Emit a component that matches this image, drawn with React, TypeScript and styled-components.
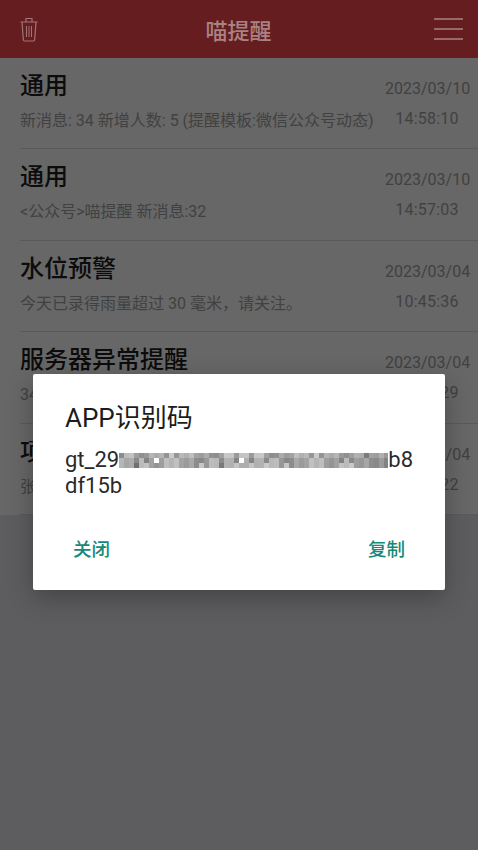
import * as React from 'react';
import styled, { createGlobalStyle } from 'styled-components';

const FONT = `Roboto, "Noto Sans CJK SC", sans-serif`;

const GlobalStyle = createGlobalStyle`
    html, body {
        margin: 0;
        padding: 0;
        background: #5d5d5f;
    }
    * {
        box-sizing: border-box;
    }
`;

const Screen = styled.div`
    position: relative;
    width: 478px;
    height: 850px;
    overflow: hidden;
    background: #5d5d5f;
    font-family: ${FONT};
`;

const Header = styled.header`
    display: flex;
    align-items: center;
    justify-content: space-between;
    height: 58px;
    padding: 0 15px 0 20px;
    background: #651d1f;
`;

const Title = styled.h1`
    margin: 0 0 0 5px;
    font-size: 22px;
    font-weight: 500;
    color: #a98283;
`;

const List = styled.div`
    background: #676767;
`;

const Row = styled.div`
    display: flex;
    justify-content: space-between;
    height: 91.4px;
    margin-left: 20px;
    padding: 12px 8px 0 0;
    border-bottom: 1px solid #5a5a5a;
`;

const RowMain = styled.div`
    min-width: 0;
`;

const RowTitle = styled.div`
    font-size: 24px;
    line-height: 32px;
    font-weight: 500;
    color: #0c0c0c;
`;

const RowText = styled.div`
    margin-top: 7px;
    font-size: 16px;
    line-height: 24px;
    white-space: nowrap;
    color: #414141;
`;

const RowTime = styled.div`
    width: 85px;
    padding-top: 7px;
    text-align: center;
    font-size: 16px;
    line-height: 24px;
    color: #414141;
`;

const TimeLine = styled.div`
    margin-top: 6px;
    padding-right: 1px;
    letter-spacing: 0.2px;
`;

const Overlay = styled.div`
    position: absolute;
    top: 374px;
    left: 33px;
    width: 412px;
    height: 216px;
    padding: 28px 32px 0;
    display: flex;
    flex-direction: column;
    border-radius: 2px;
    background: #ffffff;
    box-shadow: 0 8px 26px rgba(0, 0, 0, 0.28);
`;

const DialogTitle = styled.h2`
    margin: 0;
    font-size: 26px;
    line-height: 32px;
    font-weight: 400;
    color: #1c1c1c;
`;

const DialogBody = styled.div`
    margin-top: 13px;
    font-size: 22px;
    line-height: 26px;
    color: #2a2a2a;
`;

const CodeLine = styled.div`
    display: flex;
    align-items: center;
`;

const Actions = styled.div`
    display: flex;
    justify-content: space-between;
    margin-top: 39px;
    padding: 0 8px 0 8px;
`;

const ActionButton = styled.button`
    padding: 0;
    border: 0;
    background: none;
    font-family: ${FONT};
    font-size: 18.5px;
    line-height: 24px;
    font-weight: 500;
    color: #16897b;
`;

const TrashIcon = () => (
    <svg width="18" height="25" viewBox="0 0 18 25" fill="none" stroke="#a07577" strokeWidth="1.2">
        <path d="M.5 5h17M6 5V1.5h6V5M2 5l1.3 17.5q.1 1.5 1.5 1.5h8.4q1.4 0 1.5-1.5L16 5" />
        <path d="M6.5 9v11M9 9v11M11.5 9v11" strokeWidth="1" />
    </svg>
);

const MenuIcon = () => (
    <svg width="29" height="22" viewBox="0 0 29 22" stroke="#a98283" strokeWidth="1.6">
        <path d="M0 1h29M0 11h29M0 21h29" />
    </svg>
);

const CELL = 5;
const COLUMNS = 54;
const ROW_COUNT = 3;
// cells that stand out in the pixelated part of the code, as "row-column"
const MOSAIC_SPOTS: Record<string, string> = {
    '1-7': '#ffffff',
    '1-24': '#ffffff',
    '2-3': '#707070',
    '2-20': '#787878',
};

const mosaicGrey = (row: number, column: number): string => {
    const spot = MOSAIC_SPOTS[`${row}-${column}`];
    if (spot) {
        return spot;
    }
    const noise = ((column * 37 + row * 53 + column * column * 11) % 64) - 32;
    const base = column > 46 ? 0x9c : 0xac;
    const level = base + noise + (row === 1 ? -10 : 0);
    const hex = level.toString(16).padStart(2, '0');
    return `#${hex}${hex}${hex}`;
};

const Mosaic = () => (
    <svg width={CELL * COLUMNS} height={CELL * ROW_COUNT} shapeRendering="crispEdges">
        {Array.from({ length: ROW_COUNT }, (_, row) =>
            Array.from({ length: COLUMNS }, (_, column) => (
                <rect
                    key={`${row}-${column}`}
                    x={column * CELL}
                    y={row * CELL}
                    width={CELL}
                    height={CELL}
                    fill={mosaicGrey(row, column)}
                />
            ))
        )}
    </svg>
);

const ROWS = [
    { title: '通用', text: '新消息: 34 新增人数: 5 (提醒模板:微信公众号动态)', date: '2023/03/10', time: '14:58:10' },
    { title: '通用', text: '<公众号>喵提醒 新消息:32', date: '2023/03/10', time: '14:57:03' },
    { title: '水位预警', text: '今天已录得雨量超过 30 毫米，请关注。', date: '2023/03/04', time: '10:45:36' },
    { title: '服务器异常提醒', text: '34', date: '2023/03/04', time: '10:45:29' },
    { title: '项目', text: '张', date: '2023/03/04', time: '10:45:22' },
];

const App = () => (
    <Screen>
        <GlobalStyle />
        <Header>
            <TrashIcon />
            <Title>喵提醒</Title>
            <MenuIcon />
        </Header>
        <List>
            {ROWS.map((row, i) => (
                <Row key={i}>
                    <RowMain>
                        <RowTitle>{row.title}</RowTitle>
                        <RowText>{row.text}</RowText>
                    </RowMain>
                    <RowTime>
                        <div>{row.date}</div>
                        <TimeLine>{row.time}</TimeLine>
                    </RowTime>
                </Row>
            ))}
        </List>
        <Overlay>
            <DialogTitle>APP识别码</DialogTitle>
            <DialogBody>
                <CodeLine>gt_29<Mosaic />b8</CodeLine>
                <div>df15b</div>
            </DialogBody>
            <Actions>
                <ActionButton>关闭</ActionButton>
                <ActionButton>复制</ActionButton>
            </Actions>
        </Overlay>
    </Screen>
);

export default App;
